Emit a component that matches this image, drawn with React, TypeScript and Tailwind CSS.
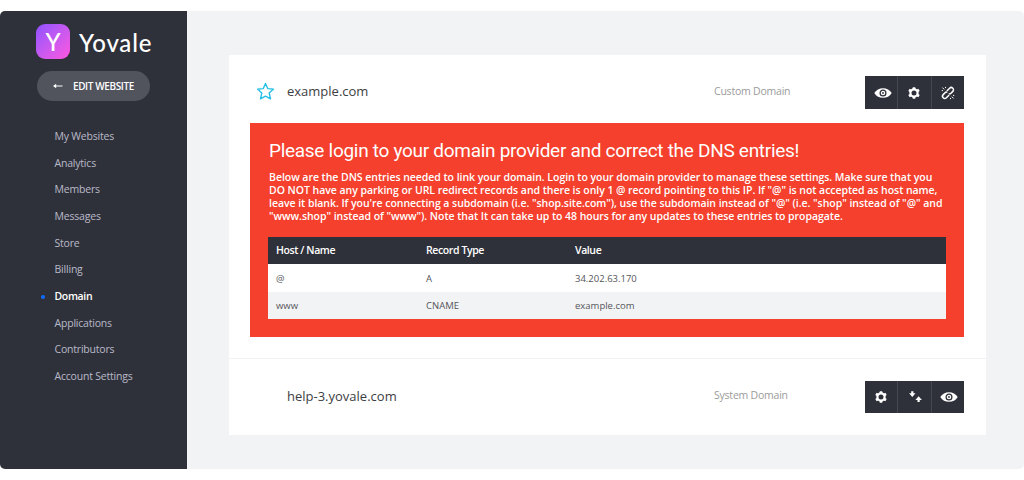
import type { ReactNode } from 'react';

const navItems = [
  'My Websites',
  'Analytics',
  'Members',
  'Messages',
  'Store',
  'Billing',
  'Domain',
  'Applications',
  'Contributors',
  'Account Settings',
];

const paragraph = [
  'Below are the DNS entries needed to link your domain. Login to your domain provider to manage these settings. Make sure that you',
  'DO NOT have any parking or URL redirect records and there is only 1 @ record pointing to this IP. If "@" is not accepted as host name,',
  'leave it blank. If you\'re connecting a subdomain (i.e. "shop.site.com"), use the subdomain instead of "@" (i.e. "shop" instead of "@" and',
  '"www.shop" instead of "www"). Note that It can take up to 48 hours for any updates to these entries to propagate.',
];

function Eye() {
  return (
    <svg width="18" height="12" viewBox="0 0 18 12" fill="none" className="ml-[3px]">
      <path d="M0.3 6C2.3 2.7 5.3 1.2 9 1.2S15.700 2.700 17.700 6C15.700 9.300 12.700 10.800 9 10.800S2.300 9.300 0.300 6Z" fill="#fff" />
      <circle cx="9" cy="6" r="2.900" stroke="#2f313a" strokeWidth="1.300" />
      <circle cx="9" cy="6" r="0.900" fill="#2f313a" />
    </svg>
  );
}

function Gear() {
  return (
    <svg width="12" height="12" viewBox="0 0 12 12" fill="none">
      <circle cx="6" cy="6" r="3.600" stroke="#fff" strokeWidth="2.200" />
      <path
        d="M4.800 0.300H7.200L7.600 2.200H4.400ZM4.800 11.700H7.200L7.600 9.800H4.400ZM0.300 3.900L1.600 1.700L3.700 2.700L2.100 5.300ZM11.700 3.900L10.400 1.700L8.300 2.700L9.900 5.300ZM0.300 8.100L1.600 10.300L3.700 9.300L2.100 6.700ZM11.700 8.100L10.400 10.300L8.300 9.300L9.900 6.700Z"
        fill="#fff"
      />
    </svg>
  );
}

function Unlink() {
  return (
    <svg width="14" height="14" viewBox="0 0 14 14" fill="none" stroke="#fff" strokeWidth="1.500" strokeLinecap="round">
      <path d="M6.300 4.500L8.600 2.200A2.200 2.200 0 0 1 11.800 5.400L9.700 7.500Q9 8.200 8.300 7.900" />
      <path d="M7.700 9.500L5.400 11.800A2.200 2.200 0 0 1 2.200 8.600L4.300 6.500Q5 5.800 5.700 6.100" />
      <path d="M1.700 1.900L2.900 3.100M4.500 1.300V1.700M1.200 4.600H1.600M11.100 10.900L12.300 12.100M9.500 12.300V12.700M12.400 9.400H12.800" strokeWidth="1" />
    </svg>
  );
}

function Sort() {
  return (
    <svg width="13" height="12" viewBox="0 0 13 12" fill="#fff" className="ml-[3px]">
      <path d="M2.200 0.300H4.400V2.300H6.500L3.300 6L0.100 2.300H2.200Z" />
      <path d="M8.500 11H10.700V9H12.900L9.600 5.200L6.400 9H8.500Z" />
    </svg>
  );
}

function Star() {
  return (
    <svg width="19" height="19" viewBox="0 0 19 19" fill="none" stroke="#25c1e6" strokeWidth="1.400" strokeLinejoin="round">
      <path d="M9.500 1.400L11.700 6.600L17.500 7.100L13.200 11L14.500 16.800L9.500 14.100L4.500 16.800L5.800 11L1.500 7.100L7.300 6.600Z" />
    </svg>
  );
}

function Actions({ items }: { items: ReactNode[] }) {
  return (
    <div className="flex h-full w-[99px] divide-x divide-[#454751] bg-[#2f313a]">
      {items.map((item, i) => (
        <button key={i} className="flex flex-1 items-center justify-center">
          {item}
        </button>
      ))}
    </div>
  );
}

export default function App() {
  return (
    <div className="h-[480px] w-[1024px] bg-white pt-[11px] font-['Open_Sans',sans-serif]">
      <div className="flex h-[458px] overflow-hidden rounded-[5px] bg-[#f2f3f5]">
        <aside className="w-[187px] shrink-0 bg-[#2f313a]">
          <div className="flex h-[60px] items-start pt-[13px] pl-[36px]">
            <div className="flex h-[35px] w-[34px] items-center justify-center rounded-[9px] bg-linear-to-br from-[#8f50ff] to-[#ff55df] font-[Lato] text-[24px] leading-none font-medium text-white">
              Y
            </div>
            <div className="ml-[9px] pt-[5px] font-[Lato] text-[24px] leading-[28px] font-medium tracking-[0.800px] text-white">
              Yovale
            </div>
          </div>
          <button className="ml-[37px] flex h-[30px] w-[113px] items-center rounded-full bg-[#51535d] pl-[16px] text-white">
            <svg width="10" height="6" viewBox="0 0 10 6" fill="none">
              <path d="M1 3H9.500" stroke="#fff" strokeWidth="1" />
              <path d="M0 3L3.200 0.800V5.200Z" fill="#fff" />
            </svg>
            <span className="ml-[10px] text-[10px] font-semibold tracking-[-0.400px] whitespace-nowrap">EDIT WEBSITE</span>
          </button>
          <nav className="pt-[22.500px]">
            {navItems.map((item) => (
              <a
                key={item}
                className={
                  item === 'Domain'
                    ? 'flex h-[26.700px] items-center pl-[41px] text-[10.500px] font-semibold tracking-[-0.350px] text-white'
                    : 'flex h-[26.700px] items-center pl-[54.500px] text-[10.500px] tracking-[-0.200px] text-[#b9bac9]'
                }
              >
                {item === 'Domain' && <span className="mr-[9.500px] size-[4px] rounded-full bg-[#0c6cff]" />}
                {item}
              </a>
            ))}
          </nav>
        </aside>
        <main className="flex-1 pt-[44px] pl-[42px]">
          <section className="h-[380px] w-[757px] bg-white">
            <div className="h-[304px] border-b border-[#f2f2f4] pt-[21px]">
              <div className="flex h-[33px] items-center">
                <div className="ml-[27px] w-[31px] pb-[3px]">
                  <Star />
                </div>
                <div className="w-[427px] pb-px text-[13px] text-[#3d3e43]">example.com</div>
                <div className="w-[151px] pb-[2px] text-[10.500px] tracking-[-0.220px] text-[#9b9b9b]">Custom Domain</div>
                <Actions items={[<Eye />, <Gear />, <Unlink />]} />
              </div>
              <div className="mt-[14px] ml-[21px] h-[214px] w-[714px] bg-[#f4402c] px-[18px] pt-[15px] text-white">
                <h1 className="pt-px pl-px font-[Roboto] text-[19px] leading-[24px] font-normal tracking-[-0.290px] whitespace-nowrap">
                  Please login to your domain provider and correct the DNS entries!
                </h1>
                <p className="mt-[8px] pl-px text-[10.500px] leading-[13px] font-semibold tracking-[-0.042px] whitespace-nowrap">
                  {paragraph.map((line) => (
                    <span key={line} className="block">
                      {line}
                    </span>
                  ))}
                </p>
                <table className="mt-[14px] w-[678px] table-fixed border-collapse text-left text-[9.500px] text-[#55565a]">
                  <colgroup>
                    <col className="w-[150px]" />
                    <col className="w-[149px]" />
                    <col />
                  </colgroup>
                  <thead className="bg-[#2f313a] text-[10.500px] tracking-[-0.400px] text-white">
                    <tr className="h-[27px]">
                      {['Host / Name', 'Record Type', 'Value'].map((h) => (
                        <th key={h} className="px-[8px] py-0 font-semibold">
                          {h}
                        </th>
                      ))}
                    </tr>
                  </thead>
                  <tbody>
                    <tr className="h-[28px] bg-white">
                      <td className="px-[8px] pt-[2px] pb-0">@</td>
                      <td className="px-[8px] pt-[2px] pb-0">A</td>
                      <td className="px-[8px] pt-[2px] pb-0">34.202.63.170</td>
                    </tr>
                    <tr className="h-[27px] bg-[#f2f3f5]">
                      <td className="px-[8px] pt-[2px] pb-0">www</td>
                      <td className="px-[8px] pt-[2px] pb-0">CNAME</td>
                      <td className="px-[8px] pt-[2px] pb-0">example.com</td>
                    </tr>
                  </tbody>
                </table>
              </div>
            </div>
            <div className="mt-[22px] flex h-[32px] items-center">
              <div className="ml-[58px] w-[427px] pb-px text-[13px] text-[#3d3e43]">help-3.yovale.com</div>
              <div className="w-[151px] pb-[2px] text-[10.500px] tracking-[-0.220px] text-[#9b9b9b]">System Domain</div>
              <Actions items={[<Gear />, <Sort />, <Eye />]} />
            </div>
          </section>
        </main>
      </div>
    </div>
  );
}
